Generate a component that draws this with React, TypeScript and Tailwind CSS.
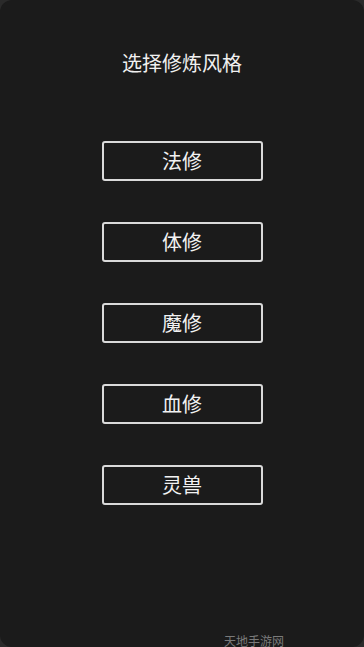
export default function App() {
  const items = ["法修", "体修", "魔修", "血修", "灵兽"];
  return (
    <div className="w-[364px] h-[647px] bg-[#2a2a2a] overflow-hidden" style={{ fontFamily: '"Noto Sans CJK SC", "Noto Sans", sans-serif' }}>
      <div className="relative w-full h-full bg-[#1b1b1b] rounded-[12px] flex flex-col items-center">
        <div className="mt-[49px] text-[20px] leading-[28px] text-[#f0f0f0]">选择修炼风格</div>
        <div className="mt-[64px] flex flex-col gap-[41px]">
          {items.map((t) => (
            <div
              key={t}
              className="w-[161px] h-[40px] border-2 border-[#dadada] rounded-[3px] flex items-center justify-center text-[20px] text-[#f2f2f2]"
            >
              {t}
            </div>
          ))}
        </div>
        <div className="absolute left-[224px] top-[633px] text-[12px] leading-[16px] text-[#7a7a7a]">天地手游网</div>
      </div>
    </div>
  );
}
